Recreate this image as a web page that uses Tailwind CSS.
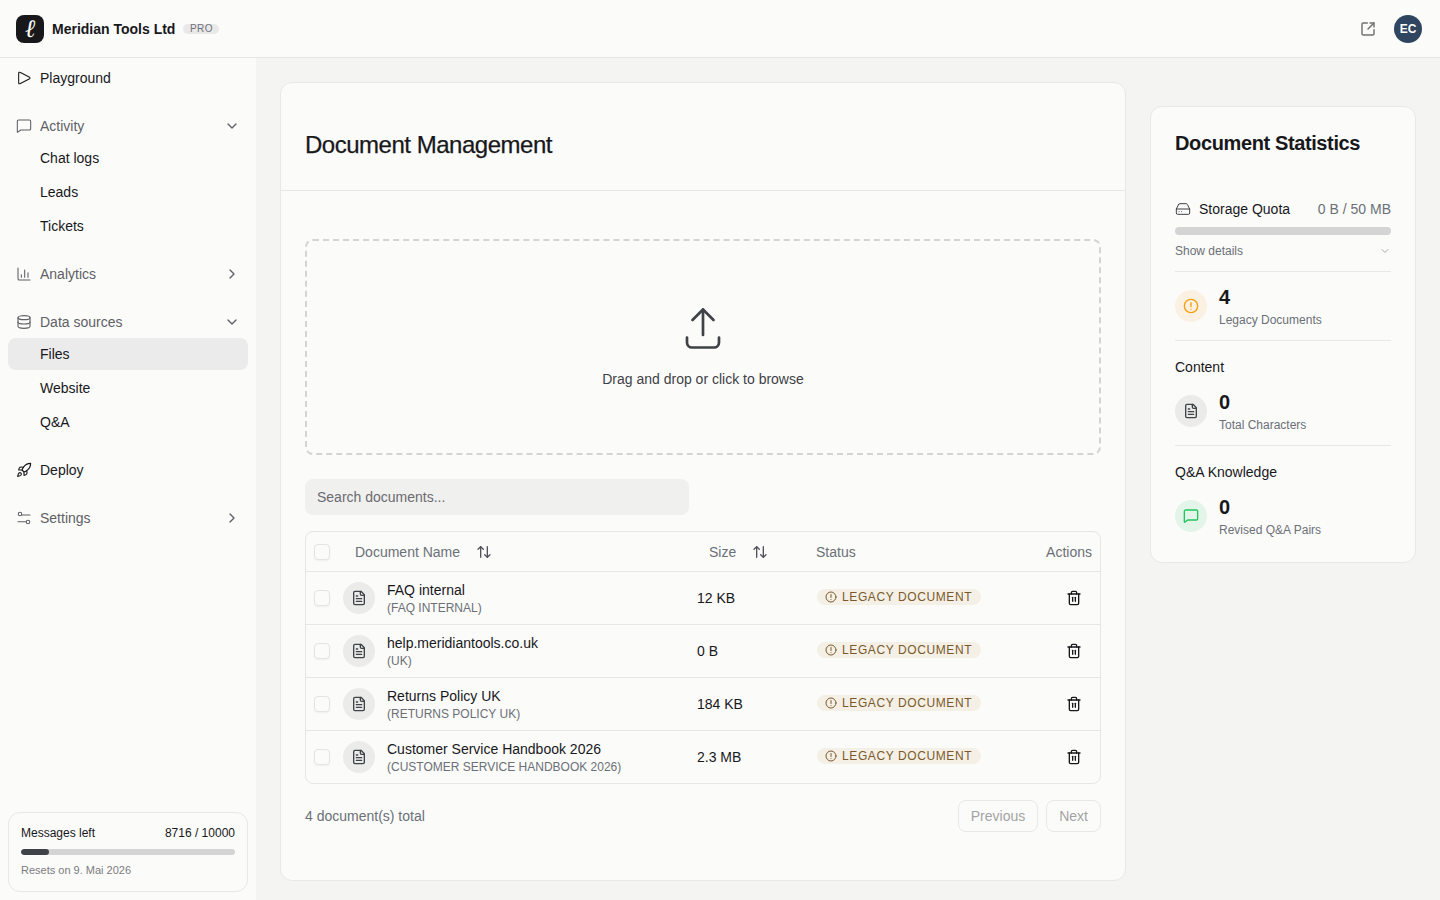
<!DOCTYPE html>
<html lang="en">
<head>
    <meta charset="UTF-8">
    <title>Document Management</title>
    <script src="https://cdn.jsdelivr.net/npm/@tailwindcss/browser@4"></script>
</head>
<body class="h-[900px] overflow-hidden bg-[#f4f4f3] font-['Liberation_Sans',sans-serif] text-[#18181b]">
    <!-- Top bar -->
    <header class="h-[58px] flex items-center justify-between pl-4 pr-[18px] bg-[#fbfbfa] border-b border-[#e6e6e5]">
        <div class="flex items-center">
            <div class="w-7 h-7 rounded-lg bg-[#18181a] flex items-center justify-center text-white text-[25px] leading-none italic font-['DejaVu_Serif',serif]">ℓ</div>
            <span class="ml-2 text-sm font-bold">Meridian Tools Ltd</span>
            <span class="ml-2 mt-px w-9 h-[10px] rounded-full bg-[#e9e9e9] text-center text-[10px] leading-[10px] tracking-[0.4px] text-[#71717a]">PRO</span>
        </div>
        <div class="flex items-center gap-[18px]">
            <svg class="w-4 h-4 text-[#737373]" viewBox="0 0 24 24" fill="none" stroke="currentColor" stroke-width="2.2" stroke-linecap="round" stroke-linejoin="round"><path d="M21 13v6a2 2 0 0 1-2 2H5a2 2 0 0 1-2-2V5a2 2 0 0 1 2-2h6"/><path d="M21 9V3h-6"/><path d="M21 3l-9 9"/></svg>
            <div class="w-7 h-7 rounded-full bg-[#2f4560] flex items-center justify-center text-white text-xs font-bold">EC</div>
        </div>
    </header>

    <div class="flex h-[842px]">
        <!-- Sidebar -->
        <aside class="w-[256px] shrink-0 bg-[#fbfbfa] flex flex-col justify-between px-2 pt-1 pb-2">
            <nav class="text-sm flex flex-col gap-4">
                <a class="h-8 flex items-center px-2 gap-2">
                    <svg class="w-4 h-4" viewBox="0 0 24 24" fill="none" stroke="currentColor" stroke-width="1.6" stroke-linecap="round" stroke-linejoin="round"><path d="M4 4.5v15a1.2 1.2 0 0 0 1.8 1L20.5 13a1.2 1.2 0 0 0 0-2L5.8 3.5A1.2 1.2 0 0 0 4 4.5z"/></svg>
                    Playground
                </a>
                <div>
                    <div class="h-8 flex items-center px-2 gap-2 text-[#5f5f65]">
                        <svg class="w-4 h-4" viewBox="0 0 24 24" fill="none" stroke="currentColor" stroke-width="1.6" stroke-linecap="round" stroke-linejoin="round"><path d="M22 16a2 2 0 0 1-2 2H7l-4.3 3.2a.4.4 0 0 1-.7-.3V5a2 2 0 0 1 2-2h16a2 2 0 0 1 2 2z"/></svg>
                        <span class="flex-1">Activity</span>
                        <svg class="w-4 h-4" viewBox="0 0 24 24" fill="none" stroke="currentColor" stroke-width="2" stroke-linecap="round" stroke-linejoin="round"><path d="m6 9 6 6 6-6"/></svg>
                    </div>
                    <div class="flex flex-col gap-[2px]">
                        <a class="h-8 flex items-center pl-8">Chat logs</a>
                        <a class="h-8 flex items-center pl-8">Leads</a>
                        <a class="h-8 flex items-center pl-8">Tickets</a>
                    </div>
                </div>
                <div class="h-8 flex items-center px-2 gap-2 text-[#5f5f65]">
                    <svg class="w-4 h-4" viewBox="0 0 24 24" fill="none" stroke="currentColor" stroke-width="1.6" stroke-linecap="round" stroke-linejoin="round"><path d="M3 3v16a2 2 0 0 0 2 2h16"/><path d="M8 17v-4"/><path d="M13 17V6"/><path d="M18 17V10"/></svg>
                    <span class="flex-1">Analytics</span>
                    <svg class="w-4 h-4" viewBox="0 0 24 24" fill="none" stroke="currentColor" stroke-width="2" stroke-linecap="round" stroke-linejoin="round"><path d="m9 6 6 6-6 6"/></svg>
                </div>
                <div>
                    <div class="h-8 flex items-center px-2 gap-2 text-[#5f5f65]">
                        <svg class="w-4 h-4" viewBox="0 0 24 24" fill="none" stroke="currentColor" stroke-width="1.7" stroke-linecap="round" stroke-linejoin="round"><ellipse cx="12" cy="5.5" rx="9" ry="3"/><path d="M3 5.5v13c0 1.66 4 3 9 3s9-1.34 9-3v-13"/><path d="M3 12c0 1.66 4 3 9 3s9-1.34 9-3"/></svg>
                        <span class="flex-1">Data sources</span>
                        <svg class="w-4 h-4" viewBox="0 0 24 24" fill="none" stroke="currentColor" stroke-width="2" stroke-linecap="round" stroke-linejoin="round"><path d="m6 9 6 6 6-6"/></svg>
                    </div>
                    <div class="flex flex-col gap-[2px]">
                        <a class="h-8 flex items-center pl-8 rounded-lg bg-[#ebebeb]">Files</a>
                        <a class="h-8 flex items-center pl-8">Website</a>
                        <a class="h-8 flex items-center pl-8">Q&amp;A</a>
                    </div>
                </div>
                <a class="h-8 flex items-center px-2 gap-2">
                    <svg class="w-4 h-4" viewBox="0 0 24 24" fill="none" stroke="currentColor" stroke-width="1.7" stroke-linecap="round" stroke-linejoin="round"><path d="M4.5 16.5c-1.5 1.26-2 5-2 5s3.74-.5 5-2c.71-.84.7-2.13-.09-2.91a2.18 2.18 0 0 0-2.91-.09z"/><path d="m12 15-3-3a22 22 0 0 1 2-3.95A12.88 12.88 0 0 1 22 2c0 2.72-.78 7.5-6 11a22.35 22.35 0 0 1-4 2z"/><path d="M9 12H4s.55-3.03 2-4c1.62-1.08 5 0 5 0"/><path d="M12 15v5s3.03-.55 4-2c1.08-1.62 0-5 0-5"/></svg>
                    Deploy
                </a>
                <div class="h-8 flex items-center px-2 gap-2 text-[#5f5f65]">
                    <svg class="w-4 h-4" viewBox="0 0 24 24" fill="none" stroke="currentColor" stroke-width="1.6" stroke-linecap="round" stroke-linejoin="round"><path d="M8.5 7.5H21"/><path d="M3 17.5h12"/><circle cx="6" cy="6" r="2.6"/><circle cx="18" cy="18" r="2.6"/></svg>
                    <span class="flex-1">Settings</span>
                    <svg class="w-4 h-4" viewBox="0 0 24 24" fill="none" stroke="currentColor" stroke-width="2" stroke-linecap="round" stroke-linejoin="round"><path d="m9 6 6 6-6 6"/></svg>
                </div>
            </nav>

            <div class="h-20 border border-[#e8e8e7] rounded-xl px-3 pt-[11px]">
                <div class="flex justify-between text-xs leading-[18px]">
                    <span>Messages left</span>
                    <span>8716 / 10000</span>
                </div>
                <div class="mt-[7px] h-[6px] rounded-full bg-[#d4d4d4] overflow-hidden">
                    <div class="h-full bg-[#3f4347] rounded-full" style="width: 13%"></div>
                </div>
                <p class="mt-[6px] text-[11px] leading-[18px] text-[#7b7b80]">Resets on 9. Mai 2026</p>
            </div>
        </aside>

        <!-- Main -->
        <main class="flex-1 flex gap-6 pl-6 pr-6 pt-6">
            <section class="w-[846px] h-[799px] shrink-0 bg-[#fbfbfa] border border-[#e8e8e7] rounded-xl">
                <div class="h-[108px] border-b border-[#e6e6e5] px-6 pt-[44px]">
                    <h1 class="text-2xl leading-[36px] font-medium tracking-[-0.48px] [-webkit-text-stroke:0.25px]">Document Management</h1>
                </div>
                <div class="px-6 pt-12">
                    <div class="h-[216px] border-2 border-dashed border-[#d4d4d4] rounded-lg flex flex-col items-center pt-[63px]">
                        <svg class="w-12 h-12 text-[#3f4347]" viewBox="0 0 48 48" fill="none" stroke="currentColor" stroke-width="2.7" stroke-linecap="round" stroke-linejoin="round"><path d="M24 31V5.5"/><path d="M13.5 16 24 5.5 34.5 16"/><path d="M8 33.5v5a5 5 0 0 0 5 5h22a5 5 0 0 0 5-5v-5"/></svg>
                        <p class="mt-[17px] text-sm leading-5 text-[#3f3f46]">Drag and drop or click to browse</p>
                    </div>
                    <div class="mt-6 w-[384px] h-9 rounded-lg bg-[#f0f0ef] flex items-center px-3 text-sm text-[#6b6b70]">Search documents...</div>

                    <div class="mt-4 border border-[#e6e6e5] rounded-lg overflow-hidden">
                        <table class="w-full table-fixed text-sm">
                            <thead>
                                <tr class="h-[39px] text-[#6b7076]">
                                    <th class="w-[37px] pl-2 pt-[2px] font-normal text-left align-middle"><span class="block w-4 h-4 border border-[#e4e4e4] rounded bg-[#fbfbfa] shadow-xs"></span></th>
                                    <th class="w-[354px] pl-3 pt-[2px] font-normal text-left">
                                        <span class="flex items-center gap-4">Document Name
                                            <svg class="w-4 h-4 text-[#52525b]" viewBox="0 0 24 24" fill="none" stroke="currentColor" stroke-width="2" stroke-linecap="round" stroke-linejoin="round"><path d="m3 8 4-4 4 4"/><path d="M7 4v16"/><path d="m21 16-4 4-4-4"/><path d="M17 20V4"/></svg>
                                        </span>
                                    </th>
                                    <th class="w-[119px] pl-3 pt-[2px] font-normal text-left">
                                        <span class="flex items-center gap-4">Size
                                            <svg class="w-4 h-4 text-[#52525b]" viewBox="0 0 24 24" fill="none" stroke="currentColor" stroke-width="2" stroke-linecap="round" stroke-linejoin="round"><path d="m3 8 4-4 4 4"/><path d="M7 4v16"/><path d="m21 16-4 4-4-4"/><path d="M17 20V4"/></svg>
                                        </span>
                                    </th>
                                    <th class="pt-[2px] font-normal text-left">Status</th>
                                    <th class="w-[70px] pr-2 pt-[2px] font-normal text-right">Actions</th>
                                </tr>
                            </thead>
                            <tbody>
                                <tr class="h-[53px] border-t border-[#e6e6e5]">
                                    <td class="pl-2"><span class="block w-4 h-4 border border-[#e4e4e4] rounded bg-[#fbfbfa] shadow-xs"></span></td>
                                    <td>
                                        <div class="flex items-center gap-3">
                                            <div class="w-8 h-8 rounded-full bg-[#ebebea] flex items-center justify-center">
                                                <svg class="w-4 h-4 text-[#3f4347]" viewBox="0 0 24 24" fill="none" stroke="currentColor" stroke-width="2" stroke-linecap="round" stroke-linejoin="round"><path d="M15 2H6a2 2 0 0 0-2 2v16a2 2 0 0 0 2 2h12a2 2 0 0 0 2-2V7z"/><path d="M14 2v4a2 2 0 0 0 2 2h4"/><path d="M10 9H8"/><path d="M16 13H8"/><path d="M16 17H8"/></svg>
                                            </div>
                                            <div class="pt-[3px]">
                                                <div class="leading-[18px]">FAQ internal</div>
                                                <div class="text-xs leading-[18px] text-[#6b7076]">(FAQ INTERNAL)</div>
                                            </div>
                                        </div>
                                    </td>
                                    <td>12 KB</td>
                                    <td>
                                        <span class="inline-flex items-center gap-[5px] h-4 ml-px pl-2 pr-[9px] rounded-full bg-[#f5f0e6] text-xs tracking-[0.6px] text-[#7a5a2c]">
                                            <svg class="w-3 h-3" viewBox="0 0 24 24" fill="none" stroke="currentColor" stroke-width="2" stroke-linecap="round"><circle cx="12" cy="12" r="10"/><path d="M12 7v6"/><path d="M12 17h.01"/></svg>
                                            LEGACY DOCUMENT
                                        </span>
                                    </td>
                                    <td class="pr-[18px]">
                                        <svg class="ml-auto w-4 h-4" viewBox="0 0 24 24" fill="none" stroke="currentColor" stroke-width="2" stroke-linecap="round" stroke-linejoin="round"><path d="M3 6h18"/><path d="M19 6v14a2 2 0 0 1-2 2H7a2 2 0 0 1-2-2V6"/><path d="M8 6V4a2 2 0 0 1 2-2h4a2 2 0 0 1 2 2v2"/><path d="M10 11v6"/><path d="M14 11v6"/></svg>
                                    </td>
                                </tr>
                                <tr class="h-[53px] border-t border-[#e6e6e5]">
                                    <td class="pl-2"><span class="block w-4 h-4 border border-[#e4e4e4] rounded bg-[#fbfbfa] shadow-xs"></span></td>
                                    <td>
                                        <div class="flex items-center gap-3">
                                            <div class="w-8 h-8 rounded-full bg-[#ebebea] flex items-center justify-center">
                                                <svg class="w-4 h-4 text-[#3f4347]" viewBox="0 0 24 24" fill="none" stroke="currentColor" stroke-width="2" stroke-linecap="round" stroke-linejoin="round"><path d="M15 2H6a2 2 0 0 0-2 2v16a2 2 0 0 0 2 2h12a2 2 0 0 0 2-2V7z"/><path d="M14 2v4a2 2 0 0 0 2 2h4"/><path d="M10 9H8"/><path d="M16 13H8"/><path d="M16 17H8"/></svg>
                                            </div>
                                            <div class="pt-[3px]">
                                                <div class="leading-[18px]">help.meridiantools.co.uk</div>
                                                <div class="text-xs leading-[18px] text-[#6b7076]">(UK)</div>
                                            </div>
                                        </div>
                                    </td>
                                    <td>0 B</td>
                                    <td>
                                        <span class="inline-flex items-center gap-[5px] h-4 ml-px pl-2 pr-[9px] rounded-full bg-[#f5f0e6] text-xs tracking-[0.6px] text-[#7a5a2c]">
                                            <svg class="w-3 h-3" viewBox="0 0 24 24" fill="none" stroke="currentColor" stroke-width="2" stroke-linecap="round"><circle cx="12" cy="12" r="10"/><path d="M12 7v6"/><path d="M12 17h.01"/></svg>
                                            LEGACY DOCUMENT
                                        </span>
                                    </td>
                                    <td class="pr-[18px]">
                                        <svg class="ml-auto w-4 h-4" viewBox="0 0 24 24" fill="none" stroke="currentColor" stroke-width="2" stroke-linecap="round" stroke-linejoin="round"><path d="M3 6h18"/><path d="M19 6v14a2 2 0 0 1-2 2H7a2 2 0 0 1-2-2V6"/><path d="M8 6V4a2 2 0 0 1 2-2h4a2 2 0 0 1 2 2v2"/><path d="M10 11v6"/><path d="M14 11v6"/></svg>
                                    </td>
                                </tr>
                                <tr class="h-[53px] border-t border-[#e6e6e5]">
                                    <td class="pl-2"><span class="block w-4 h-4 border border-[#e4e4e4] rounded bg-[#fbfbfa] shadow-xs"></span></td>
                                    <td>
                                        <div class="flex items-center gap-3">
                                            <div class="w-8 h-8 rounded-full bg-[#ebebea] flex items-center justify-center">
                                                <svg class="w-4 h-4 text-[#3f4347]" viewBox="0 0 24 24" fill="none" stroke="currentColor" stroke-width="2" stroke-linecap="round" stroke-linejoin="round"><path d="M15 2H6a2 2 0 0 0-2 2v16a2 2 0 0 0 2 2h12a2 2 0 0 0 2-2V7z"/><path d="M14 2v4a2 2 0 0 0 2 2h4"/><path d="M10 9H8"/><path d="M16 13H8"/><path d="M16 17H8"/></svg>
                                            </div>
                                            <div class="pt-[3px]">
                                                <div class="leading-[18px]">Returns Policy UK</div>
                                                <div class="text-xs leading-[18px] text-[#6b7076]">(RETURNS POLICY UK)</div>
                                            </div>
                                        </div>
                                    </td>
                                    <td>184 KB</td>
                                    <td>
                                        <span class="inline-flex items-center gap-[5px] h-4 ml-px pl-2 pr-[9px] rounded-full bg-[#f5f0e6] text-xs tracking-[0.6px] text-[#7a5a2c]">
                                            <svg class="w-3 h-3" viewBox="0 0 24 24" fill="none" stroke="currentColor" stroke-width="2" stroke-linecap="round"><circle cx="12" cy="12" r="10"/><path d="M12 7v6"/><path d="M12 17h.01"/></svg>
                                            LEGACY DOCUMENT
                                        </span>
                                    </td>
                                    <td class="pr-[18px]">
                                        <svg class="ml-auto w-4 h-4" viewBox="0 0 24 24" fill="none" stroke="currentColor" stroke-width="2" stroke-linecap="round" stroke-linejoin="round"><path d="M3 6h18"/><path d="M19 6v14a2 2 0 0 1-2 2H7a2 2 0 0 1-2-2V6"/><path d="M8 6V4a2 2 0 0 1 2-2h4a2 2 0 0 1 2 2v2"/><path d="M10 11v6"/><path d="M14 11v6"/></svg>
                                    </td>
                                </tr>
                                <tr class="h-[53px] border-t border-[#e6e6e5]">
                                    <td class="pl-2"><span class="block w-4 h-4 border border-[#e4e4e4] rounded bg-[#fbfbfa] shadow-xs"></span></td>
                                    <td>
                                        <div class="flex items-center gap-3">
                                            <div class="w-8 h-8 rounded-full bg-[#ebebea] flex items-center justify-center">
                                                <svg class="w-4 h-4 text-[#3f4347]" viewBox="0 0 24 24" fill="none" stroke="currentColor" stroke-width="2" stroke-linecap="round" stroke-linejoin="round"><path d="M15 2H6a2 2 0 0 0-2 2v16a2 2 0 0 0 2 2h12a2 2 0 0 0 2-2V7z"/><path d="M14 2v4a2 2 0 0 0 2 2h4"/><path d="M10 9H8"/><path d="M16 13H8"/><path d="M16 17H8"/></svg>
                                            </div>
                                            <div class="pt-[3px]">
                                                <div class="leading-[18px]">Customer Service Handbook 2026</div>
                                                <div class="text-xs leading-[18px] text-[#6b7076]">(CUSTOMER SERVICE HANDBOOK 2026)</div>
                                            </div>
                                        </div>
                                    </td>
                                    <td>2.3 MB</td>
                                    <td>
                                        <span class="inline-flex items-center gap-[5px] h-4 ml-px pl-2 pr-[9px] rounded-full bg-[#f5f0e6] text-xs tracking-[0.6px] text-[#7a5a2c]">
                                            <svg class="w-3 h-3" viewBox="0 0 24 24" fill="none" stroke="currentColor" stroke-width="2" stroke-linecap="round"><circle cx="12" cy="12" r="10"/><path d="M12 7v6"/><path d="M12 17h.01"/></svg>
                                            LEGACY DOCUMENT
                                        </span>
                                    </td>
                                    <td class="pr-[18px]">
                                        <svg class="ml-auto w-4 h-4" viewBox="0 0 24 24" fill="none" stroke="currentColor" stroke-width="2" stroke-linecap="round" stroke-linejoin="round"><path d="M3 6h18"/><path d="M19 6v14a2 2 0 0 1-2 2H7a2 2 0 0 1-2-2V6"/><path d="M8 6V4a2 2 0 0 1 2-2h4a2 2 0 0 1 2 2v2"/><path d="M10 11v6"/><path d="M14 11v6"/></svg>
                                    </td>
                                </tr>
                            </tbody>
                        </table>
                    </div>

                    <div class="mt-4 flex items-center justify-between text-sm">
                        <span class="text-[#6b7076]">4 document(s) total</span>
                        <div class="flex gap-2 text-[#a3a3a3]">
                            <span class="h-8 px-3 flex items-center border border-[#e8e8e7] rounded-lg">Previous</span>
                            <span class="h-8 px-3 flex items-center border border-[#e8e8e7] rounded-lg">Next</span>
                        </div>
                    </div>
                </div>
            </section>

            <!-- Stats -->
            <aside class="w-[266px] h-[457px] shrink-0 mt-6 bg-[#fbfbfa] border border-[#e8e8e7] rounded-xl px-6 pt-[22px]">
                <h2 class="text-xl leading-7 font-bold tracking-[-0.38px]">Document Statistics</h2>
                <div class="mt-[42px] flex items-center justify-between text-sm leading-5">
                    <span class="flex items-center gap-2">
                        <svg class="w-4 h-4 text-[#3f3f46]" viewBox="0 0 24 24" fill="none" stroke="currentColor" stroke-width="1.5" stroke-linecap="round" stroke-linejoin="round"><path d="M22 12H2"/><path d="M5.45 5.11 2 12v6a2 2 0 0 0 2 2h16a2 2 0 0 0 2-2v-6l-3.45-6.89A2 2 0 0 0 16.76 4H7.24a2 2 0 0 0-1.79 1.11z"/><path d="M6 16h.01"/><path d="M10 16h.01"/></svg>
                        Storage Quota
                    </span>
                    <span class="text-[#6b7076]">0 B / 50 MB</span>
                </div>
                <div class="mt-2 h-2 rounded-full bg-[#d4d4d4]"></div>
                <div class="mt-2 flex items-center justify-between text-xs leading-4 text-[#6b7076] pb-3 border-b border-[#e8e8e7]">
                    Show details
                    <svg class="w-3 h-3 text-[#9a9a9f]" viewBox="0 0 24 24" fill="none" stroke="currentColor" stroke-width="1.7" stroke-linecap="round" stroke-linejoin="round"><path d="m6 9 6 6 6-6"/></svg>
                </div>

                <div class="flex gap-3 pt-[18px] pb-[12px] border-b border-[#e8e8e7]">
                    <div class="w-8 h-8 rounded-full bg-[#faf1e3] flex items-center justify-center">
                        <svg class="w-4 h-4 text-[#f59e0b]" viewBox="0 0 24 24" fill="none" stroke="currentColor" stroke-width="2" stroke-linecap="round"><circle cx="12" cy="12" r="10"/><path d="M12 7v6"/><path d="M12 17h.01"/></svg>
                    </div>
                    <div class="-mt-[7px]">
                        <div class="text-xl leading-[28px] font-bold">4</div>
                        <div class="mt-px text-xs leading-4 text-[#6b7076]">Legacy Documents</div>
                    </div>
                </div>

                <div class="pt-4 text-sm leading-5">Content</div>
                <div class="flex gap-3 pt-[18px] pb-[12px] border-b border-[#e8e8e7]">
                    <div class="w-8 h-8 rounded-full bg-[#ebebea] flex items-center justify-center">
                        <svg class="w-4 h-4 text-[#3f4347]" viewBox="0 0 24 24" fill="none" stroke="currentColor" stroke-width="2" stroke-linecap="round" stroke-linejoin="round"><path d="M15 2H6a2 2 0 0 0-2 2v16a2 2 0 0 0 2 2h12a2 2 0 0 0 2-2V7z"/><path d="M14 2v4a2 2 0 0 0 2 2h4"/><path d="M10 9H8"/><path d="M16 13H8"/><path d="M16 17H8"/></svg>
                    </div>
                    <div class="-mt-[7px]">
                        <div class="text-xl leading-[28px] font-bold">0</div>
                        <div class="mt-px text-xs leading-4 text-[#6b7076]">Total Characters</div>
                    </div>
                </div>

                <div class="pt-4 text-sm leading-5">Q&amp;A Knowledge</div>
                <div class="flex gap-3 pt-[18px]">
                    <div class="w-8 h-8 rounded-full bg-[#e2f5e8] flex items-center justify-center">
                        <svg class="w-4 h-4 text-[#22c55e]" viewBox="0 0 24 24" fill="none" stroke="currentColor" stroke-width="2" stroke-linecap="round" stroke-linejoin="round"><path d="M22 16a2 2 0 0 1-2 2H7l-4.3 3.2a.4.4 0 0 1-.7-.3V5a2 2 0 0 1 2-2h16a2 2 0 0 1 2 2z"/></svg>
                    </div>
                    <div class="-mt-[7px]">
                        <div class="text-xl leading-[28px] font-bold">0</div>
                        <div class="mt-px text-xs leading-4 text-[#6b7076]">Revised Q&amp;A Pairs</div>
                    </div>
                </div>
            </aside>
        </main>
    </div>
</body>
</html>
